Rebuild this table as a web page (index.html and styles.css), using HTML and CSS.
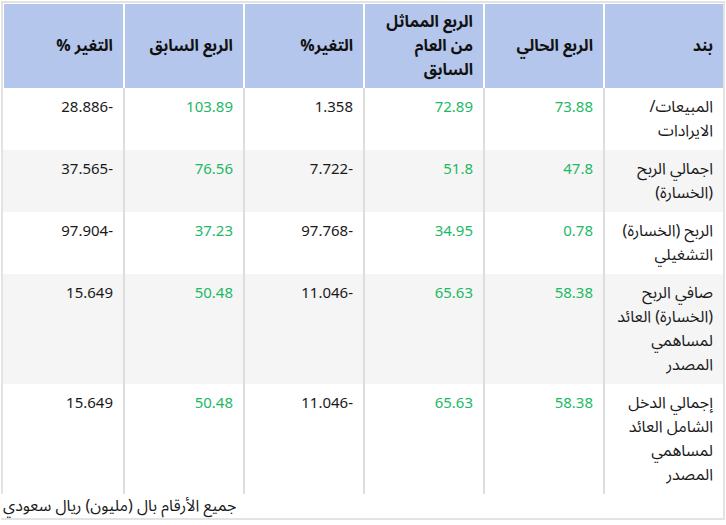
FILE: index.html
```html
<!DOCTYPE html>
<html lang="ar" dir="rtl">
<head>
<meta charset="utf-8">
<title>نتائج مالية</title>
<link rel="stylesheet" href="styles.css">
</head>
<body>
<div class="wrap">
  <table class="fin">
    <thead>
      <tr>
        <th>بند</th>
        <th>الربع الحالي</th>
        <th>الربع المماثل من العام السابق</th>
        <th>التغير%</th>
        <th>الربع السابق</th>
        <th>التغير %</th>
      </tr>
    </thead>
    <tbody>
      <tr>
        <td>المبيعات/ الايرادات</td>
        <td class="num pos">73.88</td>
        <td class="num pos">72.89</td>
        <td class="num">1.358</td>
        <td class="num pos">103.89</td>
        <td class="num">-28.886</td>
      </tr>
      <tr class="alt">
        <td>اجمالي الربح (الخسارة)</td>
        <td class="num pos">47.8</td>
        <td class="num pos">51.8</td>
        <td class="num">-7.722</td>
        <td class="num pos">76.56</td>
        <td class="num">-37.565</td>
      </tr>
      <tr>
        <td>الربح (الخسارة) التشغيلي</td>
        <td class="num pos">0.78</td>
        <td class="num pos">34.95</td>
        <td class="num">-97.768</td>
        <td class="num pos">37.23</td>
        <td class="num">-97.904</td>
      </tr>
      <tr class="alt">
        <td>صافي الربح (الخسارة) العائد لمساهمي المصدر</td>
        <td class="num pos">58.38</td>
        <td class="num pos">65.63</td>
        <td class="num">-11.046</td>
        <td class="num pos">50.48</td>
        <td class="num">15.649</td>
      </tr>
      <tr>
        <td>إجمالي الدخل الشامل العائد لمساهمي المصدر</td>
        <td class="num pos">58.38</td>
        <td class="num pos">65.63</td>
        <td class="num">-11.046</td>
        <td class="num pos">50.48</td>
        <td class="num">15.649</td>
      </tr>
    </tbody>
  </table>
  <div class="note">جميع الأرقام بال (مليون) ريال سعودي</div>
</div>
</body>
</html>
```

FILE: styles.css
```css
html, body {
  margin: 0;
  padding: 0;
  background: #ffffff;
}

body {
  font-family: "Noto Sans Arabic", "Noto Sans", "DejaVu Sans", sans-serif;
  font-size: 16px;
  color: #1a1a1a;
}

.wrap {
  margin: 1px;
  border-top: 2px solid #e3e3e3;
  border-right: 2px solid #e3e3e3;
  border-bottom: 2px solid #e3e3e3;
}

.fin {
  width: 100%;
  table-layout: fixed;
  border-collapse: separate;
  border-spacing: 0;
  border-left: 2px solid #e3e3e3;
}

.fin th {
  background: #b4c6ec;
  color: #111111;
  font-weight: 700;
  text-align: right;
  vertical-align: middle;
  line-height: 24px;
  padding: 6px 10px 6px 8px;
  height: 72px;
  border-top: 1px solid #ffffff;
  border-left: 2px solid #ffffff;
}

.fin th:last-child {
  border-left-width: 1px;
}

.fin td {
  text-align: right;
  vertical-align: top;
  line-height: 24px;
  padding: 7px 10px 7px 8px;
  border-left: 2px solid #dddddd;
}

.fin td.num {
  font-size: 15px;
}

.fin td:last-child {
  border-left: none;
}

.fin tr.alt td {
  background: #f5f5f5;
}

.fin td.pos {
  color: #1db964;
}

.note {
  text-align: left;
  line-height: 24px;
  padding-left: 2px;
  color: #1a1a1a;
}
```
